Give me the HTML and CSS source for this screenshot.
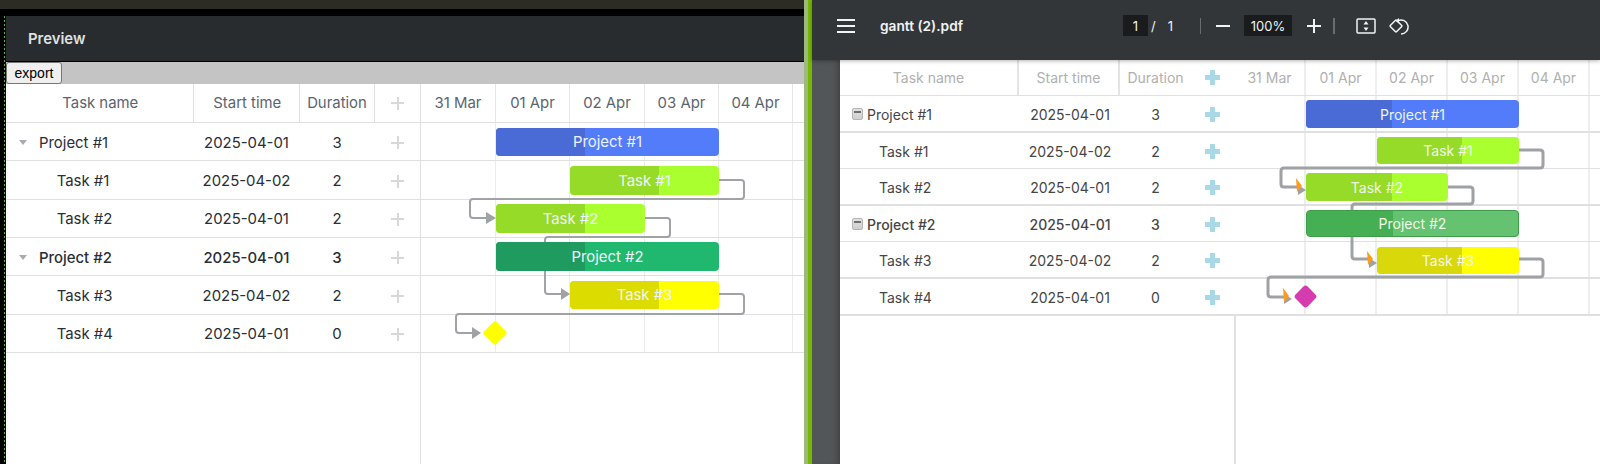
FILE: index.html
```html
<!DOCTYPE html>
<html lang="en">
<head>
  <meta charset="UTF-8">
  <title>Gantt export preview</title>
  <link rel="stylesheet" href="styles.css">
</head>
<body>
  <section class="editor">
    <div class="top-strip"></div>
    <div class="editor-main">
      <div class="gutter"></div>
      <div class="editor-content">
        <header class="preview-head">Preview</header>
        <div class="export-bar"><button class="export-btn">export</button></div>
        <div class="gantt gantt-live">
          <div class="row head">
            <div class="cell">Task name</div><div class="cell">Start time</div><div class="cell">Duration</div><div class="cell add"><span class="plus"></span></div>
            <div class="cell day">31 Mar</div><div class="cell day">01 Apr</div><div class="cell day">02 Apr</div><div class="cell day">03 Apr</div><div class="cell day">04 Apr</div><div class="cell day"></div>
          </div>
          <div class="row">
            <div class="cell name project"><span class="caret"></span>Project #1</div><div class="cell">2025-04-01</div><div class="cell">3</div><div class="cell add"><span class="plus"></span></div>
            <div class="cell day"></div><div class="cell day"></div><div class="cell day"></div><div class="cell day"></div><div class="cell day"></div><div class="cell day"></div>
          </div>
          <div class="row">
            <div class="cell name">Task #1</div><div class="cell">2025-04-02</div><div class="cell">2</div><div class="cell add"><span class="plus"></span></div>
            <div class="cell day"></div><div class="cell day"></div><div class="cell day"></div><div class="cell day"></div><div class="cell day"></div><div class="cell day"></div>
          </div>
          <div class="row">
            <div class="cell name">Task #2</div><div class="cell">2025-04-01</div><div class="cell">2</div><div class="cell add"><span class="plus"></span></div>
            <div class="cell day"></div><div class="cell day"></div><div class="cell day"></div><div class="cell day"></div><div class="cell day"></div><div class="cell day"></div>
          </div>
          <div class="row strong">
            <div class="cell name project"><span class="caret"></span>Project #2</div><div class="cell">2025-04-01</div><div class="cell">3</div><div class="cell add"><span class="plus"></span></div>
            <div class="cell day"></div><div class="cell day"></div><div class="cell day"></div><div class="cell day"></div><div class="cell day"></div><div class="cell day"></div>
          </div>
          <div class="row">
            <div class="cell name">Task #3</div><div class="cell">2025-04-02</div><div class="cell">2</div><div class="cell add"><span class="plus"></span></div>
            <div class="cell day"></div><div class="cell day"></div><div class="cell day"></div><div class="cell day"></div><div class="cell day"></div><div class="cell day"></div>
          </div>
          <div class="row">
            <div class="cell name">Task #4</div><div class="cell">2025-04-01</div><div class="cell">0</div><div class="cell add"><span class="plus"></span></div>
            <div class="cell day"></div><div class="cell day"></div><div class="cell day"></div><div class="cell day"></div><div class="cell day"></div><div class="cell day"></div>
          </div>
          <div class="rest"><div class="rest-side"></div></div>

          <!-- the svg viewBox uses screen coordinates, easier to read off the picture -->
          <svg class="links" viewBox="6 84 798 380" width="798" height="380">
            <path d="M719 180 H741 q3 0 3 3 V196 q0 3 -3 3 H473 q-3 0 -3 3 V215 q0 3 3 3 H487"/>
            <polygon points="486,212 496,218 486,224"/>
            <path d="M645 218 H667 q3 0 3 3 V234 q0 3 -3 3 H548 q-3 0 -3 3 V291 q0 3 3 3 H562"/>
            <polygon points="561,288 570,294 561,300"/>
            <path d="M719 294 H741 q3 0 3 3 V311 q0 3 -3 3 H459 q-3 0 -3 3 V330 q0 3 3 3 H473"/>
            <polygon points="472,327 481,333 472,339"/>
          </svg>

          <div class="bar blue p1"><span class="done"></span><span class="label">Project #1</span></div>
          <div class="bar lime t1"><span class="done"></span><span class="label">Task #1</span></div>
          <div class="bar lime t2"><span class="done"></span><span class="label">Task #2</span></div>
          <div class="bar green p2"><span class="done"></span><span class="label">Project #2</span></div>
          <div class="bar yellow t3"><span class="done"></span><span class="label">Task #3</span></div>
          <div class="milestone"></div>
        </div>
      </div>
    </div>
  </section>

  <div class="splitter"></div>

  <section class="viewer">
    <header class="toolbar">
      <svg class="menu-icon" viewBox="0 0 18 14" width="18" height="14"><path d="M0 1h18M0 7h18M0 13h18"/></svg>
      <div class="doc-title">gantt (2).pdf</div>
      <div class="field page-field">1</div>
      <span class="page-sep">/</span>
      <span class="page-total">1</span>
      <span class="tool-sep first"></span>
      <svg class="tool minus" viewBox="0 0 14 14" width="14" height="14"><path d="M0 7h14"/></svg>
      <div class="field zoom-field">100%</div>
      <svg class="tool zoom-plus" viewBox="0 0 14 14" width="14" height="14"><path d="M0 7h14M7 0v14"/></svg>
      <span class="tool-sep second"></span>
      <svg class="tool fit" viewBox="0 0 20 16" width="20" height="16">
        <rect x="1" y="1" width="18" height="14" rx="1"/>
        <polygon class="fill" points="10,3 12.5,6.5 7.5,6.5"/>
        <polygon class="fill" points="10,13 12.5,9.5 7.5,9.5"/>
      </svg>
      <svg class="tool rotate" viewBox="0 0 20 20" width="20" height="20">
        <rect x="2.6" y="5.6" width="8.8" height="8.8" rx="1" transform="rotate(45 7 10)"/>
        <path d="M9 4.7A7 7 0 1 1 12 18"/>
        <polygon class="fill" points="6.5,4.7 10,2 10,7.5"/>
      </svg>
    </header>
    <div class="viewer-main">
      <div class="side"></div>
      <div class="gantt gantt-pdf">
        <div class="row head">
          <div class="cell">Task name</div><div class="cell">Start time</div><div class="cell">Duration</div><div class="cell add"><span class="plus"></span></div>
          <div class="cell day">31 Mar</div><div class="cell day">01 Apr</div><div class="cell day">02 Apr</div><div class="cell day">03 Apr</div><div class="cell day">04 Apr</div><div class="cell day"></div>
        </div>
        <div class="row thick">
          <div class="cell name project"><span class="expander"></span>Project #1</div><div class="cell">2025-04-01</div><div class="cell">3</div><div class="cell add"><span class="plus"></span></div>
          <div class="cell day"></div><div class="cell day"></div><div class="cell day"></div><div class="cell day"></div><div class="cell day"></div><div class="cell day"></div>
        </div>
        <div class="row">
          <div class="cell name">Task #1</div><div class="cell">2025-04-02</div><div class="cell">2</div><div class="cell add"><span class="plus"></span></div>
          <div class="cell day"></div><div class="cell day"></div><div class="cell day"></div><div class="cell day"></div><div class="cell day"></div><div class="cell day"></div>
        </div>
        <div class="row thick">
          <div class="cell name">Task #2</div><div class="cell">2025-04-01</div><div class="cell">2</div><div class="cell add"><span class="plus"></span></div>
          <div class="cell day"></div><div class="cell day"></div><div class="cell day"></div><div class="cell day"></div><div class="cell day"></div><div class="cell day"></div>
        </div>
        <div class="row strong">
          <div class="cell name project"><span class="expander"></span>Project #2</div><div class="cell">2025-04-01</div><div class="cell">3</div><div class="cell add"><span class="plus"></span></div>
          <div class="cell day"></div><div class="cell day"></div><div class="cell day"></div><div class="cell day"></div><div class="cell day"></div><div class="cell day"></div>
        </div>
        <div class="row thick">
          <div class="cell name">Task #3</div><div class="cell">2025-04-02</div><div class="cell">2</div><div class="cell add"><span class="plus"></span></div>
          <div class="cell day"></div><div class="cell day"></div><div class="cell day"></div><div class="cell day"></div><div class="cell day"></div><div class="cell day"></div>
        </div>
        <div class="row thick last">
          <div class="cell name">Task #4</div><div class="cell">2025-04-01</div><div class="cell">0</div><div class="cell add"><span class="plus"></span></div>
          <div class="cell day"></div><div class="cell day"></div><div class="cell day"></div><div class="cell day"></div><div class="cell day"></div><div class="cell day"></div>
        </div>
        <div class="rest"><div class="rest-side"></div></div>

        <svg class="links" viewBox="840 60 760 404" width="760" height="404">
          <path d="M1519 150 H1540 q3 0 3 3 V165 q0 3 -3 3 H1284 q-3 0 -3 3 V184 q0 3 3 3 H1298"/>
          <polygon points="1298,185 1306,190 1298,195"/>
          <polygon class="tip" points="1296,178 1302,186 1297,192"/>
          <path d="M1448 187 H1470 q3 0 3 3 V201 q0 3 -3 3 H1355 q-3 0 -3 3 V256 q0 3 3 3 H1368"/>
          <polygon points="1369,258 1377,263 1369,268"/>
          <polygon class="tip" points="1367,251 1373,259 1368,265"/>
          <path d="M1519 259 H1540 q3 0 3 3 V274 q0 3 -3 3 H1271 q-3 0 -3 3 V294 q0 3 3 3 H1284"/>
          <polygon points="1284,294 1292,299 1284,304"/>
          <polygon class="tip" points="1283,288 1289,296 1284,302"/>
        </svg>

        <div class="bar blue p1"><span class="done"></span><span class="label">Project #1</span></div>
        <div class="bar lime t1"><span class="done"></span><span class="label">Task #1</span></div>
        <div class="bar lime t2"><span class="done"></span><span class="label">Task #2</span></div>
        <div class="bar green p2"><span class="done"></span><span class="label">Project #2</span></div>
        <div class="bar yellow t3"><span class="done"></span><span class="label">Task #3</span></div>
        <div class="milestone"></div>
      </div>
    </div>
  </section>
</body>
</html>
```

FILE: styles.css
```css
* {
  box-sizing: border-box;
}
html, body {
  height: 100%;
}
body {
  margin: 0;
  display: flex;
  overflow: hidden;
  font-family: Inter, "Noto Sans", sans-serif;
  background: #fff;
}

/* left side: the page with the live gantt */
.editor {
  width: 804px;
  display: flex;
  flex-direction: column;
  background: #000;
}
.top-strip {
  height: 9px;
  background: #2c2c24;
}
.editor-main {
  flex: 1;
  display: flex;
  min-height: 0;
  padding-top: 7px;
}
.gutter {
  width: 6px;
  background: repeating-linear-gradient(#5fae3a 0 2px, #000 2px 4px) 4px 0 / 1px 100% no-repeat;
}
.editor-content {
  flex: 1;
  display: flex;
  flex-direction: column;
  min-width: 0;
}
.preview-head {
  height: 45px;
  padding-left: 22px;
  display: flex;
  align-items: center;
  background: #282c2f;
  color: #dfe1e3;
  font-size: 14.9px;
  font-weight: 600;
  margin-bottom: 1px;
}
.export-bar {
  height: 22px;
  background: #c4c4c4;
}
.export-btn {
  display: block;
  width: 56px;
  height: 22px;
  padding: 0;
  font-family: "Liberation Sans", Arial, sans-serif;
  font-size: 14px;
  color: #000;
  background: #efefef;
  border: 1px solid #767676;
  border-radius: 3px;
}

/* gantt shared */
.gantt {
  position: relative;
  flex: 1;
  display: flex;
  flex-direction: column;
  background: #fff;
  min-width: 0;
}
.row {
  display: grid;
  flex: none;
}
.cell {
  display: flex;
  align-items: center;
  justify-content: center;
  min-width: 0;
}
.row:not(.head) .cell {
  padding-top: 2px;
}
.cell.name {
  justify-content: flex-start;
}
.plus {
  display: block;
  background-repeat: no-repeat;
  background-position: center;
}
.rest {
  flex: 1;
  display: flex;
}
.links {
  position: absolute;
  left: 0;
  top: 0;
}
.links path {
  fill: none;
}
.bar {
  position: absolute;
  display: flex;
  align-items: center;
  justify-content: center;
  overflow: hidden;
  border-radius: 4px;
}
.bar .done {
  position: absolute;
  left: 0;
  top: 0;
  bottom: 0;
}
.bar .label {
  position: relative;
}
.bar.blue { background: #537cfa; }
.bar.blue .done { background: #4a6bd6; }
.bar.lime { background: #aaff2e; }
.bar.lime .done { background: #96db28; }
.bar.green { background: #20b86f; }
.bar.green .done { background: #1f9b60; }
.bar.yellow { background: #ffff00; }
.bar.yellow .done { background: #dcdc00; }
.milestone {
  position: absolute;
  transform: rotate(45deg);
  border-radius: 3px;
}

/* live gantt, origin on screen is 6,84 */
.gantt-live {
  font-size: 14.9px;
  color: #2a2e35;
}
.gantt-live .row {
  grid-template-columns: 188px 106px 75px 46px 75px 74px 75px 74px 74px 11px;
  height: 38.3px;
  border-bottom: 1px solid #e0e0e0;
}
.gantt-live .row.head {
  height: 39.2px;
  color: #5b6470;
}
.gantt-live .row.strong {
  font-weight: 500;
}
.gantt-live .head .cell:nth-child(-n+3) {
  border-right: 1px solid #e0e0e0;
}
.gantt-live .head .cell:nth-child(-n+2) {
  padding-left: 1.5px;
}
.gantt-live .row:not(.head) .cell:nth-child(n+2):nth-child(-n+3) {
  padding-right: 1px;
}
.gantt-live .add {
  border-right: 1px solid #e0e0e0;
}
.gantt-live .day {
  border-right: 1px solid #ebebeb;
}
.gantt-live .head .day {
  border-right-color: #e6e6e6;
}
.gantt-live .day:last-child {
  border-right: none;
}
.gantt-live .cell.name {
  padding-left: 50.7px;
}
.gantt-live .cell.project {
  padding-left: 13px;
}
.caret {
  width: 0;
  height: 0;
  margin-right: 12px;
  border-left: 4.5px solid transparent;
  border-right: 4.5px solid transparent;
  border-top: 5px solid #a9abb0;
}
.gantt-live .plus {
  width: 13px;
  height: 13px;
  background-image: linear-gradient(#d8d8d8, #d8d8d8), linear-gradient(#d8d8d8, #d8d8d8);
  background-size: 2px 100%, 100% 2px;
}
.gantt-live .rest-side {
  width: 415px;
  border-right: 1px solid #e0e0e0;
}
.gantt-live .links path {
  stroke: #a0a3a6;
  stroke-width: 2;
}
.gantt-live .links polygon {
  fill: #a0a3a6;
}
.gantt-live .bar {
  color: #eef4ff;
}
.gantt-live .bar .done { width: 89px; }
.gantt-live .p1 { left: 490px; top: 44px; width: 223px; height: 28px; }
.gantt-live .t1 { left: 564px; top: 82px; width: 149px; height: 29px; }
.gantt-live .t2 { left: 490px; top: 120px; width: 149px; height: 29px; }
.gantt-live .p2 { left: 490px; top: 158px; width: 223px; height: 29px; }
.gantt-live .t3 { left: 564px; top: 197px; width: 149px; height: 28px; }
.gantt-live .milestone {
  left: 480px;
  top: 240px;
  width: 18px;
  height: 18px;
  background: #ffff00;
}

/* divider between the two windows */
.splitter {
  width: 8px;
  background: #76b900;
  border-left: 4px solid #9dba7e;
}

/* right side: pdf viewer */
.viewer {
  flex: 1;
  display: flex;
  flex-direction: column;
  min-width: 0;
}
.toolbar {
  position: relative;
  z-index: 2;
  height: 60px;
  padding-bottom: 8px;
  display: flex;
  align-items: center;
  flex: none;
  background: #323639;
  color: #f1f3f4;
  box-shadow: 0 1px 4px rgba(0, 0, 0, 0.3);
}
.menu-icon {
  margin-left: 25px;
  flex: none;
}
.menu-icon path {
  stroke: #f1f3f4;
  stroke-width: 2;
}
.doc-title {
  width: 243px;
  margin-left: 25px;
  font-size: 13.7px;
  font-weight: 600;
}
.field {
  height: 21px;
  margin-top: -1px;
  display: flex;
  align-items: center;
  justify-content: center;
  background: #191b1c;
  font-size: 13px;
}
.page-field {
  width: 25px;
}
.page-sep {
  margin-left: 3px;
  font-size: 13px;
}
.page-total {
  margin-left: 12px;
  font-size: 13px;
}
.tool-sep {
  width: 1px;
  height: 16px;
  background: #6a6d70;
}
.tool-sep.first {
  margin-left: 27px;
}
.tool-sep.second {
  width: 2px;
  margin-left: 12px;
}
.tool {
  flex: none;
  fill: none;
  stroke: #f1f3f4;
  stroke-width: 2;
}
.tool .fill {
  fill: #f1f3f4;
  stroke: none;
}
.tool.minus {
  margin-left: 15px;
}
.zoom-field {
  width: 48px;
  margin-left: 14px;
}
.tool.zoom-plus {
  margin-left: 15px;
}
.tool.fit {
  margin-left: 21px;
  stroke-width: 1.5;
}
.tool.rotate {
  margin-left: 13px;
  stroke-width: 1.5;
}
.viewer-main {
  flex: 1;
  display: flex;
  min-height: 0;
}
.side {
  width: 28px;
  flex: none;
  background: #525659;
  box-shadow: inset -6px 0 6px -4px rgba(0, 0, 0, 0.25);
}

/* pdf gantt, origin on screen is 840,60 */
.gantt-pdf {
  font-size: 14px;
  color: #454545;
}
.gantt-pdf .row {
  grid-template-columns: 179px 101px 71px 44px 71px 71px 71px 71px 71px 10px;
  height: 36.5px;
  border-bottom: 1px solid #e0e0e0;
}
.gantt-pdf .row.head {
  height: 36px;
  color: #b0b0b0;
  border-bottom-width: 1.5px;
}
.gantt-pdf .row.thick {
  border-bottom-width: 2px;
}
.gantt-pdf .row.last {
  height: 37.5px;
}
.gantt-pdf .row.strong {
  font-weight: 500;
}
.gantt-pdf .head .cell:nth-child(-n+2) {
  border-right: 2px solid #e4e4e4;
}
.gantt-pdf .row:not(.head) .cell:nth-child(2) {
  padding-left: 1px;
}
.gantt-pdf .row .add {
  padding-right: 2px;
}
.gantt-pdf .day {
  border-right: 2px solid #eeeeee;
}
.gantt-pdf .day:last-child {
  border-right: none;
}
.gantt-pdf .cell.name {
  padding-left: 39px;
}
.gantt-pdf .cell.project {
  padding-left: 12px;
}
.expander {
  position: relative;
  width: 11px;
  height: 12px;
  margin-right: 4px;
  border: 1px solid #b5b5b5;
  border-radius: 2px;
  background: linear-gradient(#e2e2e2, #cfcfcf);
}
.expander::after {
  content: "";
  position: absolute;
  left: 1px;
  top: 2px;
  width: 7px;
  height: 2px;
  background: #6e6e6e;
}
.gantt-pdf .plus {
  width: 15px;
  height: 15px;
  background-image: linear-gradient(#a9d9e6, #a9d9e6), linear-gradient(#a9d9e6, #a9d9e6);
  background-size: 5px 100%, 100% 5px;
}
.gantt-pdf .rest-side {
  width: 396px;
  border-right: 2px solid #e0e0e0;
}
.gantt-pdf .links path {
  stroke: #9fa2a5;
  stroke-width: 3;
}
.gantt-pdf .links polygon {
  fill: #9fa2a5;
}
.gantt-pdf .links polygon.tip {
  fill: #ff9a1a;
}
.gantt-pdf .bar {
  color: #f2f6e8;
}
.gantt-pdf .bar .done { width: 86px; }
.gantt-pdf .t1 .done, .gantt-pdf .t3 .done { width: 85px; }
.gantt-pdf .p1 { left: 466px; top: 40px; width: 213px; height: 28px; }
.gantt-pdf .t1 { left: 537px; top: 77px; width: 142px; height: 27px; }
.gantt-pdf .t2 { left: 466px; top: 113px; width: 142px; height: 28px; }
.gantt-pdf .p2 { left: 466px; top: 150px; width: 213px; height: 27px; }
.gantt-pdf .t3 { left: 537px; top: 187px; width: 142px; height: 27px; }
.gantt-pdf .bar.green {
  background: #65c270;
  border: 1px solid #3f9c4a;
}
.gantt-pdf .bar.green .done {
  width: 86px;
  background: #47af53;
}
.gantt-pdf .bar.yellow .done {
  background: #d9d80a;
}
.gantt-pdf .milestone {
  left: 457px;
  top: 228px;
  width: 17px;
  height: 17px;
  background: #d43cb0;
}
```
